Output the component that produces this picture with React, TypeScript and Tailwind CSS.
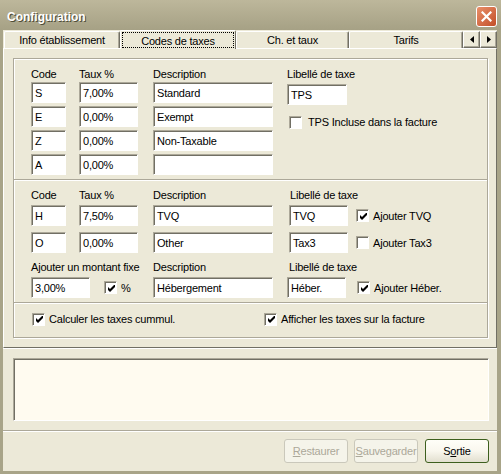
import React from "react";

const sunken =
  "border-t border-l border-b border-r border-t-[#aca899] border-l-[#aca899] border-b-white border-r-white shadow-[inset_1px_1px_0_#716f64]";

const etchedLine = "h-[2px] shrink-0 border-t border-t-[#aca899] bg-white";

function Field({ value, className }: { value: string; className: string }) {
  return (
    <div
      className={`${sunken} ${className} h-[21px] shrink-0 bg-white flex items-center pl-[3px] whitespace-nowrap overflow-hidden`}
    >
      {value}
    </div>
  );
}

function Check({ on }: { on?: boolean }) {
  return (
    <div className={`${sunken} w-[13px] h-[13px] bg-white shrink-0 flex items-center justify-center`}>
      {on && (
        <svg width="7" height="7" viewBox="0 0 7 7" className="ml-[1px] mt-[1px]">
          <polygon points="0,2 2,4 7,-1 7,2 2,7 0,5" fill="#000" />
        </svg>
      )}
    </div>
  );
}

function Tab({ label, className }: { label: string; className: string }) {
  return (
    <div
      className={`${className} h-[17px] shrink-0 flex items-center justify-center border-t border-l border-r border-t-white border-l-white border-r-[#716f64] rounded-t-[2px] shadow-[inset_-1px_0_0_#aca899]`}
    >
      {label}
    </div>
  );
}

function ArrowBtn({ dir }: { dir: "left" | "right" }) {
  return (
    <div className="w-[17px] h-[17px] shrink-0 flex items-center justify-center border-t border-l border-b border-r border-t-white border-l-white border-b-[#716f64] border-r-[#716f64] shadow-[inset_-1px_-1px_0_#aca899] bg-[#ece9d8]">
      <svg width="4" height="7" viewBox="0 0 4 7">
        {dir === "left" ? (
          <polygon points="4,0 4,7 0,3.5" fill="#000" />
        ) : (
          <polygon points="0,0 0,7 4,3.5" fill="#000" />
        )}
      </svg>
    </div>
  );
}

export default function App() {
  return (
    <div className="w-[501px] h-[474px] bg-[#a8a488] flex flex-col font-['Liberation_Sans',Arial,sans-serif] text-[11px] leading-[14px] tracking-[-0.2px] text-black select-none">
      {/* title bar */}
      <div className="h-[30px] shrink-0 flex items-center justify-between pl-[7px] pr-[4px] pt-[3px] bg-gradient-to-b from-[#bdb79b] to-[#a6a185]">
        <span className="text-[12px] font-bold tracking-normal text-white [text-shadow:1px_1px_0_#4e4c38]">Configuration</span>
        <div className="w-[21px] h-[21px] rounded-[3px] border border-white bg-gradient-to-br from-[#e8906a] to-[#c24d27] flex items-center justify-center">
          <svg width="11" height="11" viewBox="0 0 11 11">
            <path d="M1.5 1.5l8 8M9.5 1.5l-8 8" stroke="#fff" strokeWidth="2.2" strokeLinecap="square" />
          </svg>
        </div>
      </div>

      {/* body */}
      <div className="flex-1 ml-[3px] mr-[4px] mb-[3px] bg-[#ece9d8] flex flex-col">
        {/* tabs */}
        <div className="h-[18px] shrink-0 flex items-end pl-[1px]">
          <Tab label="Info établissement" className="w-[116px]" />
          <div className="relative z-10 w-[116px] h-[19px] -mb-px shrink-0 bg-[#ece9d8] border-t border-l border-r border-t-white border-l-white border-r-[#716f64] rounded-t-[2px] p-[1px]">
            <div className="h-[16px] border border-dotted border-black flex items-start justify-center pt-[1px]">
              Codes de taxes
            </div>
          </div>
          <Tab label="Ch. et taux" className="w-[113px]" />
          <Tab label="Tarifs" className="w-[114px]" />
          <ArrowBtn dir="left" />
          <ArrowBtn dir="right" />
        </div>

        {/* tab page */}
        <div className="h-[300px] shrink-0 border-t border-l border-r border-b border-t-white border-l-white border-r-[#716f64] border-b-[#716f64] shadow-[0_1px_0_#fff] flex flex-col">
          <div className="mt-[9px] ml-[9px] mr-[8px] h-[280px] border border-[#aca899] shadow-[inset_1px_1px_0_#fff,1px_1px_0_#fff] flex flex-col">
            {/* section 1 */}
            <div className="h-[120px] shrink-0 flex pl-[17px] pt-[8px]">
              <div className="w-[48px] flex flex-col">
                <div>Code</div>
                <div className="flex flex-col gap-[3px] mt-[1px]">
                  <Field value="S" className="w-[35px]" />
                  <Field value="E" className="w-[35px]" />
                  <Field value="Z" className="w-[35px]" />
                  <Field value="A" className="w-[35px]" />
                </div>
              </div>
              <div className="w-[74px] flex flex-col">
                <div>Taux %</div>
                <div className="flex flex-col gap-[3px] mt-[1px]">
                  <Field value="7,00%" className="w-[59px]" />
                  <Field value="0,00%" className="w-[59px]" />
                  <Field value="0,00%" className="w-[59px]" />
                  <Field value="0,00%" className="w-[59px]" />
                </div>
              </div>
              <div className="w-[134px] flex flex-col">
                <div>Description</div>
                <div className="flex flex-col gap-[3px] mt-[1px]">
                  <Field value="Standard" className="w-[120px]" />
                  <Field value="Exempt" className="w-[120px]" />
                  <Field value="Non-Taxable" className="w-[120px]" />
                  <Field value="" className="w-[120px]" />
                </div>
              </div>
              <div className="flex flex-col">
                <div>Libellé de taxe</div>
                <Field value="TPS" className="w-[60px] mt-[3px]" />
                <div className="flex items-center gap-[6px] ml-[2px] mt-[10px]">
                  <Check />
                  <span>TPS Incluse dans la facture</span>
                </div>
              </div>
            </div>

            <div className={etchedLine} />

            {/* section 2 */}
            <div className="h-[121px] shrink-0 pl-[17px] pt-[7px] grid grid-cols-[48px_74px_134px_1fr] content-start">
              <div>Code</div>
              <div>Taux %</div>
              <div>Description</div>
              <div className="pl-[3px]">Libellé de taxe</div>

              <Field value="H" className="w-[35px] mt-[3px]" />
              <Field value="7,50%" className="w-[59px] mt-[3px]" />
              <Field value="TVQ" className="w-[120px] mt-[3px]" />
              <div className="flex items-center mt-[3px] pl-[2px]">
                <Field value="TVQ" className="w-[59px]" />
                <div className="flex items-center gap-[4px] ml-[8px]">
                  <Check on />
                  <span>Ajouter TVQ</span>
                </div>
              </div>

              <Field value="O" className="w-[35px] mt-[6px]" />
              <Field value="0,00%" className="w-[59px] mt-[6px]" />
              <Field value="Other" className="w-[120px] mt-[6px]" />
              <div className="flex items-center mt-[6px] pl-[2px]">
                <Field value="Tax3" className="w-[59px]" />
                <div className="flex items-center gap-[4px] ml-[8px]">
                  <Check />
                  <span>Ajouter Tax3</span>
                </div>
              </div>

              <div className="col-span-2 mt-[7px]">Ajouter un montant fixe</div>
              <div className="mt-[7px]">Description</div>
              <div className="mt-[7px] pl-[2px]">Libellé de taxe</div>

              <div className="col-span-2 flex items-center mt-[3px]">
                <Field value="3,00%" className="w-[59px]" />
                <div className="flex items-center gap-[4px] ml-[14px]">
                  <Check on />
                  <span>%</span>
                </div>
              </div>
              <Field value="Hébergement" className="w-[120px] mt-[3px]" />
              <div className="flex items-center mt-[3px]">
                <Field value="Héber." className="w-[59px]" />
                <div className="flex items-center gap-[4px] ml-[11px]">
                  <Check on />
                  <span>Ajouter Héber.</span>
                </div>
              </div>
            </div>

            <div className={etchedLine} />

            {/* section 3 */}
            <div className="h-[33px] shrink-0 flex items-start pl-[18px] pt-[8px]">
              <div className="w-[232px] flex items-center gap-[4px]">
                <Check on />
                <span>Calculer les taxes cummul.</span>
              </div>
              <div className="flex items-center gap-[4px]">
                <Check on />
                <span>Afficher les taxes sur la facture</span>
              </div>
            </div>
          </div>
        </div>

        {/* memo */}
        <div className={`${sunken} mt-[10px] ml-[10px] mr-[8px] h-[63px] shrink-0 bg-[#fffbf0]`} />

        <div className={`${etchedLine} mt-[9px]`} />

        {/* buttons */}
        <div className="mt-[7px] flex justify-end pr-[8px]">
          <div className="w-[64px] h-[24px] rounded-[3px] border border-[#cac8bb] bg-[#f5f4ea] text-[#aca899] flex items-center justify-center">
            <span>
              <span className="underline">R</span>estaurer
            </span>
          </div>
          <div className="w-[64px] h-[24px] ml-[6px] rounded-[3px] border border-[#cac8bb] bg-[#f5f4ea] text-[#aca899] flex items-center justify-center whitespace-nowrap">
            <span>
              <span className="underline">S</span>auvegarder
            </span>
          </div>
          <div className="w-[64px] h-[24px] ml-[7px] rounded-[3px] border border-[#3d5f1e] bg-gradient-to-b from-[#fffef8] via-[#f9f7ee] to-[#e2dfcf] flex items-center justify-center">
            <span>
              S<span className="underline">o</span>rtie
            </span>
          </div>
        </div>
      </div>
    </div>
  );
}
